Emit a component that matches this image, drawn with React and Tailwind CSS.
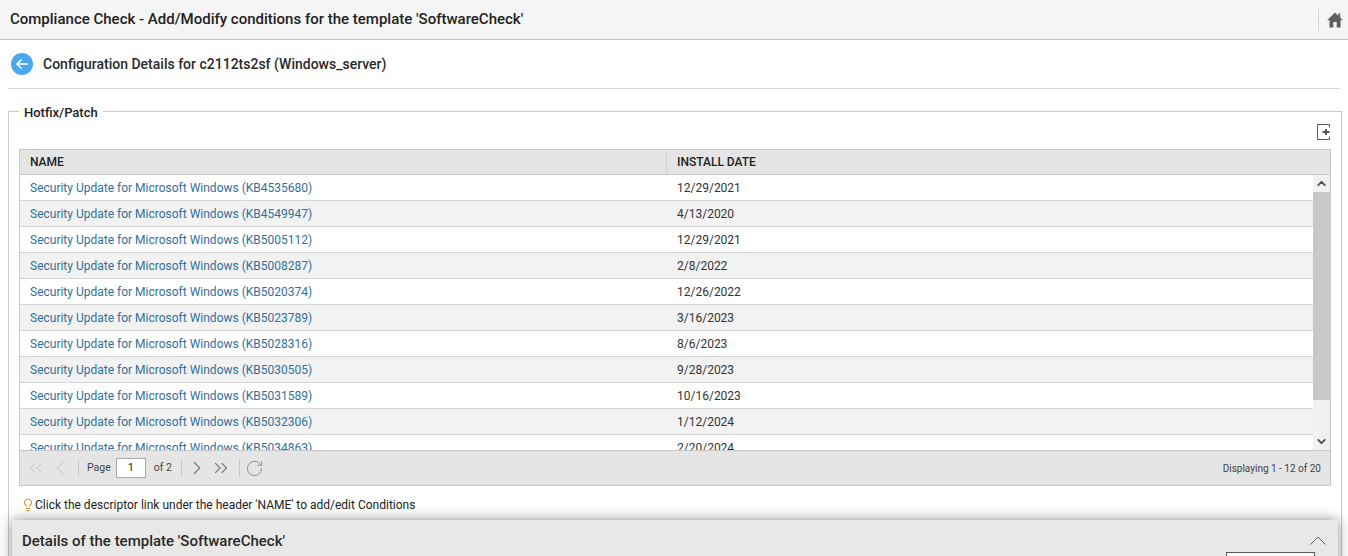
import { ChevronLeft, ChevronRight, ChevronsLeft, ChevronsRight, ChevronUp, RotateCw, Lightbulb } from "lucide-react";

const rows = [
  ["KB4535680", "12/29/2021"],
  ["KB4549947", "4/13/2020"],
  ["KB5005112", "12/29/2021"],
  ["KB5008287", "2/8/2022"],
  ["KB5020374", "12/26/2022"],
  ["KB5023789", "3/16/2023"],
  ["KB5028316", "8/6/2023"],
  ["KB5030505", "9/28/2023"],
  ["KB5031589", "10/16/2023"],
  ["KB5032306", "1/12/2024"],
  ["KB5034863", "2/20/2024"],
];

const App = () => {
  return (
    <div className="relative h-[556px] w-[1348px] overflow-hidden bg-white font-['Roboto',sans-serif] text-[#222]">
      <div className="flex h-10 items-center justify-between border-b border-[#c4c4c4] bg-[#f5f5f5] pl-2.5">
        <h1 className="text-[15px] font-medium">
          Compliance Check - Add/Modify conditions for the template 'SoftwareCheck'
        </h1>
        <div className="flex h-[22px] items-center border-l border-[#d4d4d4] pl-[8px] pr-[5px]">
          <svg width="16" height="16" viewBox="0 0 16 16" fill="#5f5f5f">
            <path d="M8 0.5 0.2 8.2H2.5V15.5H6.3V10H9.7V15.5H13.5V8.2H15.8L13.2 5.6V1.5H11.2V3.7Z" />
          </svg>
        </div>
      </div>

      <div className="mx-2 flex h-[49px] items-center gap-[10px] border-b border-[#d8d8d8] pl-[3px]">
        <span className="flex h-[22px] w-[22px] items-center justify-center rounded-full bg-[#4aa8f0]">
          <svg width="14" height="14" viewBox="0 0 14 14" fill="none" stroke="white" strokeWidth="1.6">
            <path d="M13 7H2M6.5 2.5 2 7l4.5 4.5" />
          </svg>
        </span>
        <h2 className="text-sm font-medium text-[#2a2a2a]">Configuration Details for c2112ts2sf (Windows_server)</h2>
      </div>

      <fieldset className="mx-2 mt-3 h-[460px] border border-[#c8c8c8] px-[10px]">
        <legend className="px-[5px] pt-1 text-[13px] leading-4 font-medium">Hotfix/Patch</legend>
        <div className="flex h-7 justify-end pt-[3px] pr-[1px]">
          <svg width="13" height="16" viewBox="0 0 13 16" fill="none" stroke="#555" strokeWidth="1">
            <path d="M12.5 3.5V.5H.5v15h12v-3" />
            <path d="M5.5 8h7M9 5v6" strokeWidth="2" stroke="#555" />
          </svg>
        </div>

        <div className="w-[1312px] border border-[#c8c8c8]">
          <div className="flex h-[25px] items-center border-b border-[#c8c8c8] bg-[#e5e5e5] text-xs font-medium uppercase">
            <div className="flex h-full w-[647px] items-center border-r border-[#d0d0d0] pl-[10px]">Name</div>
            <div className="pl-[10px]">Install Date</div>
          </div>

          <div className="flex h-[276px] border-b border-[#c8c8c8]">
            <div className="flex-1 overflow-hidden">
              {rows.map(([kb, date], i) => (
                <div
                  key={kb}
                  className={`flex h-[26px] shrink-0 items-center border-b border-[#d4d4d4] text-xs ${i % 2 ? "bg-[#f2f2f2]" : "bg-white"}`}
                >
                  <a className="w-[647px] pl-[10px] text-[#2e719f]">
                    Security Update for Microsoft Windows ({kb})
                  </a>
                  <span className="pl-[10px] text-[#333]">{date}</span>
                </div>
              ))}
            </div>
            <div className="flex w-[17px] flex-col bg-[#f1f1f1]">
              <div className="flex h-[17px] items-center justify-center">
                <ChevronUp size={13} strokeWidth={3.5} color="#505050" />
              </div>
              <div className="h-[208px] bg-[#c8c8c8]" />
              <div className="mt-auto flex h-[17px] items-center justify-center">
                <ChevronUp size={13} strokeWidth={3.5} color="#505050" className="rotate-180" />
              </div>
            </div>
          </div>

          <div className="flex h-[34px] items-center bg-[#e5e5e5] pl-[5px] pr-[9px] text-[10.5px] text-[#444]">
            <ChevronsLeft size={22} strokeWidth={1.2} color="#cfcfcf" />
            <ChevronLeft size={22} strokeWidth={1.2} color="#cfcfcf" className="ml-[2px]" />
            <span className="ml-[7px] h-[18px] w-px bg-[#c8c8c8]" />
            <span className="ml-2">Page</span>
            <span className="ml-[5px] flex h-5 w-[30px] items-center justify-center border border-[#a8a8a8] bg-white text-[11px] text-[#222]">1</span>
            <span className="ml-2">of 2</span>
            <span className="ml-[9px] h-[18px] w-px bg-[#c8c8c8]" />
            <ChevronRight size={22} strokeWidth={1.2} color="#777" className="ml-1" />
            <ChevronsRight size={22} strokeWidth={1.2} color="#777" className="ml-[2px]" />
            <span className="ml-[7px] h-[18px] w-px bg-[#c8c8c8]" />
            <RotateCw size={19} strokeWidth={1.2} color="#8c8c8c" className="ml-[5px]" />
            <span className="ml-auto text-[10px] text-[#444]">Displaying 1 - 12 of 20</span>
          </div>
        </div>

        <p className="mt-[11px] flex items-center text-xs text-[#222]">
          <Lightbulb size={14} strokeWidth={1.8} color="#f08419" className="ml-[2px]" />
          Click the descriptor link under the header 'NAME' to add/edit Conditions
        </p>
      </fieldset>

      {/* docked panel sits over the page */}
      <div className="absolute top-[520px] left-3 h-[60px] w-[1326px] bg-[#e8e8e8] shadow-[0_0_12px_rgba(0,0,0,0.45)]">
        <div className="flex items-center justify-between pl-[10px] pr-[12px] pt-[10px]">
          <h3 className="text-[15px] font-medium text-[#2a2a2a]">Details of the template 'SoftwareCheck'</h3>
          <svg width="16" height="9" viewBox="0 0 16 9" fill="none" stroke="#666" strokeWidth="1" className="-translate-y-px">
            <path d="M.5 8.5 8 1l7.5 7.5" />
          </svg>
        </div>
        <div className="absolute top-[32px] left-[1214px] h-6 w-[89px] border border-[#555] bg-white" />
      </div>
    </div>
  );
};

export default App;
